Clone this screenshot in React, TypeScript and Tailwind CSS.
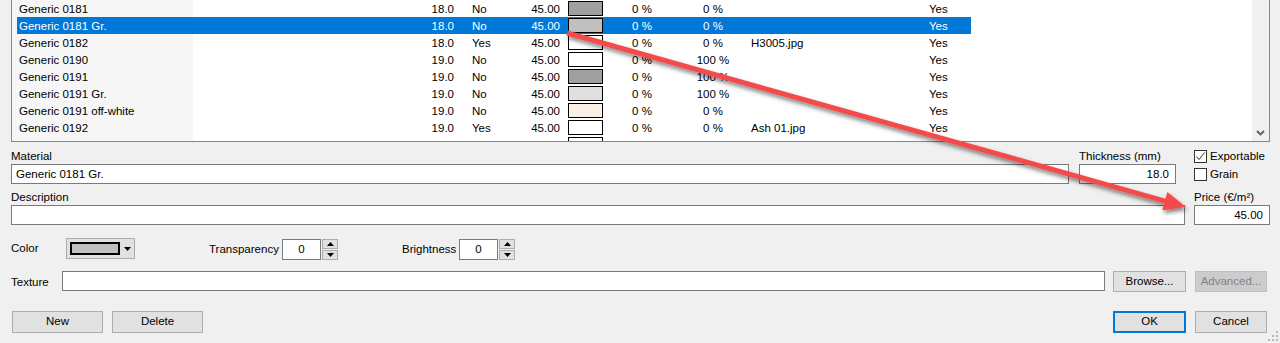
import React from "react";

type Row = {
  name: string;
  t: string;
  g: string;
  p: string;
  c: string;
  tr: string;
  br: string;
  tex: string;
  ex: string;
  sel?: boolean;
};

const rows: Row[] = [
  { name: "Generic 0181", t: "18.0", g: "No", p: "45.00", c: "#a0a0a0", tr: "0 %", br: "0 %", tex: "", ex: "Yes" },
  { name: "Generic 0181 Gr.", t: "18.0", g: "No", p: "45.00", c: "#c0c0c0", tr: "0 %", br: "0 %", tex: "", ex: "Yes", sel: true },
  { name: "Generic 0182", t: "18.0", g: "Yes", p: "45.00", c: "#ffffff", tr: "0 %", br: "0 %", tex: "H3005.jpg", ex: "Yes" },
  { name: "Generic 0190", t: "19.0", g: "No", p: "45.00", c: "#ffffff", tr: "0 %", br: "100 %", tex: "", ex: "Yes" },
  { name: "Generic 0191", t: "19.0", g: "No", p: "45.00", c: "#a0a0a0", tr: "0 %", br: "100 %", tex: "", ex: "Yes" },
  { name: "Generic 0191 Gr.", t: "19.0", g: "No", p: "45.00", c: "#e0e0e0", tr: "0 %", br: "100 %", tex: "", ex: "Yes" },
  { name: "Generic 0191 off-white", t: "19.0", g: "No", p: "45.00", c: "#faf0e6", tr: "0 %", br: "0 %", tex: "", ex: "Yes" },
  { name: "Generic 0192", t: "19.0", g: "Yes", p: "45.00", c: "#ffffff", tr: "0 %", br: "0 %", tex: "Ash 01.jpg", ex: "Yes" },
  { name: "", t: "", g: "", p: "", c: "#ffffff", tr: "", br: "", tex: "", ex: "" },
];

function ListRow({ r }: { r: Row }) {
  return (
    <div className="flex h-[17px] shrink-0 leading-[18px]">
      <div className="w-[5px] bg-[#f6f6f6]" />
      <div className={`flex w-[954px] ${r.sel ? "bg-[#0078d7] text-white" : ""}`}>
        <div className={`w-[176px] pl-[2px] whitespace-nowrap ${r.sel ? "" : "bg-[#f6f6f6]"}`}>{r.name}</div>
        <div className="w-[264px] pr-[3px] text-right">{r.t}</div>
        <div className="w-[53px] pl-[15px]">{r.g}</div>
        <div className="w-[53px] pr-[3px] text-right">{r.p}</div>
        <div className="w-[45px] pl-[5px] pt-[1px]">
          <div className="w-[35px] h-[15px] border border-black" style={{ backgroundColor: r.c }} />
        </div>
        <div className="w-[68px] text-center">{r.tr}</div>
        <div className="w-[74px] text-center">{r.br}</div>
        <div className="w-[178px] pl-[1px] whitespace-nowrap">{r.tex}</div>
        <div className="w-[43px] pl-[1px]">{r.ex}</div>
      </div>
    </div>
  );
}

function Btn({ label, w, primary, disabled, className }: { label: string; w: string; primary?: boolean; disabled?: boolean; className?: string }) {
  const base = disabled
    ? "bg-[#cccccc] border border-[#bfbfbf] text-[#838383]"
    : primary
    ? "bg-[#e1e1e1] border-2 border-[#0078d7] text-black"
    : "bg-[#e1e1e1] border border-[#adadad] text-black";
  return (
    <div className={`${w} h-[22px] flex items-center justify-center ${base} ${className ?? ""}`}>{label}</div>
  );
}

function Spinner() {
  return (
    <div className="flex h-[21px] mt-[1px]">
      <div className="w-[39px] h-[21px] border border-[#7a7a7a] bg-white flex items-center justify-center">0</div>
      <div className="w-[16px] h-[21px] flex flex-col ml-[1px]">
        <div className="h-[10px] border border-[#adadad] bg-[#e1e1e1] flex items-center justify-center">
          <svg width="7" height="4" viewBox="0 0 7 4"><polygon points="3.5,0 7,4 0,4" fill="#000" /></svg>
        </div>
        <div className="h-[10px] mt-[1px] border border-[#adadad] bg-[#e1e1e1] flex items-center justify-center">
          <svg width="7" height="4" viewBox="0 0 7 4"><polygon points="0,0 7,0 3.5,4" fill="#000" /></svg>
        </div>
      </div>
    </div>
  );
}

function Check({ checked, label }: { checked?: boolean; label: string }) {
  return (
    <div className="flex items-center h-[13px]">
      <div className="w-[13px] h-[13px] border border-[#333333] bg-white flex items-center justify-center">
        {checked && (
          <svg width="11" height="11" viewBox="0 0 11 11">
            <polyline points="1.5,5.5 4,8.5 9.5,1.5" fill="none" stroke="#333" strokeWidth="1" />
          </svg>
        )}
      </div>
      <span className="ml-[3px] leading-[13px]">{label}</span>
    </div>
  );
}

export default function App() {
  const sx = 567, sy = 33, tx = 1186, ty = 207;
  const dx = tx - sx, dy = ty - sy;
  const len = Math.sqrt(dx * dx + dy * dy);
  const ux = dx / len, uy = dy / len;
  const nx = -uy, ny = ux;
  const hl = 22, hw = 9.5;
  const bx = tx - hl * ux, by = ty - hl * uy;
  const p1 = `${bx + hw * nx},${by + hw * ny}`;
  const p2 = `${bx - hw * nx},${by - hw * ny}`;

  return (
    <div className="relative w-[1280px] h-[343px] overflow-hidden bg-[#f0f0f0] text-[11.5px] text-black font-['Liberation_Sans',Arial,sans-serif]">
      {/* List */}
      <div className="ml-[11px] w-[1259px] h-[142px] border-x border-b border-[#828790] bg-white flex overflow-hidden">
        <div className="w-[1240px] flex flex-col overflow-hidden">
          {rows.map((r, i) => (
            <ListRow key={i} r={r} />
          ))}
        </div>
        <div className="w-[17px] bg-[#f0f0f0] flex flex-col justify-end items-center pb-[5px]">
          <svg width="9" height="6" viewBox="0 0 9 6">
            <polyline points="1,1 4.5,4.5 8,1" fill="none" stroke="#606060" strokeWidth="1.8" />
          </svg>
        </div>
      </div>

      {/* Material / Thickness / checkboxes */}
      <div className="flex ml-[11px] mt-[7px]">
        <div className="w-[1058px]">
          <div className="h-[15px] leading-[15px]">Material</div>
          <div className="h-[20px] border border-[#7a7a7a] bg-white pl-[4px] leading-[18px]">Generic 0181 Gr.</div>
        </div>
        <div className="w-[97px] ml-[10px]">
          <div className="h-[15px] leading-[15px]">Thickness (mm)</div>
          <div className="h-[20px] border border-[#7a7a7a] bg-white pr-[6px] text-right leading-[18px]">18.0</div>
        </div>
        <div className="ml-[18px] pt-[1px] flex flex-col gap-[5px]">
          <Check checked label="Exportable" />
          <Check label="Grain" />
        </div>
      </div>

      {/* Description / Price */}
      <div className="flex ml-[11px] mt-[6px]">
        <div className="w-[1174px]">
          <div className="h-[15px] leading-[15px]">Description</div>
          <div className="h-[20px] border border-[#7a7a7a] bg-white" />
        </div>
        <div className="w-[76px] ml-[9px]">
          <div className="h-[15px] leading-[15px]">Price (€/m²)</div>
          <div className="h-[20px] border border-[#7a7a7a] bg-white pr-[6px] text-right leading-[18px]">45.00</div>
        </div>
      </div>

      {/* Color / Transparency / Brightness */}
      <div className="flex items-start ml-[11px] mt-[13px] h-[22px]">
        <div className="w-[55px] h-[21px] leading-[21px]">Color</div>
        <div className="w-[69px] h-[21px] border border-[#adadad] bg-[#e1e1e1] flex items-center pl-[3px]">
          <div className="w-[50px] h-[13px] border-2 border-black bg-[#c0c0c0]" />
          <svg className="ml-[4px]" width="7" height="4" viewBox="0 0 7 4"><polygon points="0,0 7,0 3.5,4" fill="#000" /></svg>
        </div>
        <div className="ml-[74px] w-[73px] h-[23px] leading-[23px]">Transparency</div>
        <Spinner />
        <div className="ml-[64px] w-[57px] h-[23px] leading-[23px]">Brightness</div>
        <Spinner />
      </div>

      {/* Texture */}
      <div className="flex items-start ml-[11px] mt-[11px]">
        <div className="w-[51px] h-[21px] leading-[23px]">Texture</div>
        <div className="w-[1043px] h-[20px] border border-[#7a7a7a] bg-white" />
        <Btn label="Browse..." w="w-[73px]" className="ml-[8px] !h-[21px]" />
        <Btn label="Advanced..." w="w-[72px]" disabled className="ml-[9px] !h-[21px]" />
      </div>

      {/* Bottom buttons */}
      <div className="flex mt-[19px] ml-[12px] mr-[13px]">
        <Btn label="New" w="w-[91px]" />
        <Btn label="Delete" w="w-[91px]" className="ml-[9px]" />
        <div className="flex-1" />
        <Btn label="OK" w="w-[73px]" primary />
        <Btn label="Cancel" w="w-[72px]" className="ml-[9px]" />
      </div>

      {/* size grip */}
      <svg className="absolute right-[2px] bottom-[2px]" width="10" height="10" viewBox="0 0 10 10">
        {[
          [8, 0], [8, 4], [4, 4], [8, 8], [4, 8], [0, 8],
        ].map(([x, y], i) => (
          <rect key={i} x={x} y={y} width="2" height="2" fill="#b8b8b8" />
        ))}
      </svg>

      {/* red arrow annotation */}
      <svg className="absolute inset-0 pointer-events-none" width="1280" height="343" viewBox="0 0 1280 343">
        <defs>
          <filter id="sh" x="-10%" y="-10%" width="120%" height="130%">
            <feDropShadow dx="1.5" dy="3" stdDeviation="2" floodColor="#000" floodOpacity="0.5" />
          </filter>
        </defs>
        <g filter="url(#sh)">
          <line x1={sx} y1={sy} x2={bx + ux * 2} y2={by + uy * 2} stroke="#f34b4b" strokeWidth="5" strokeLinecap="butt" />
          <polygon points={`${tx},${ty} ${p1} ${p2}`} fill="#f34b4b" />
        </g>
      </svg>
    </div>
  );
}
